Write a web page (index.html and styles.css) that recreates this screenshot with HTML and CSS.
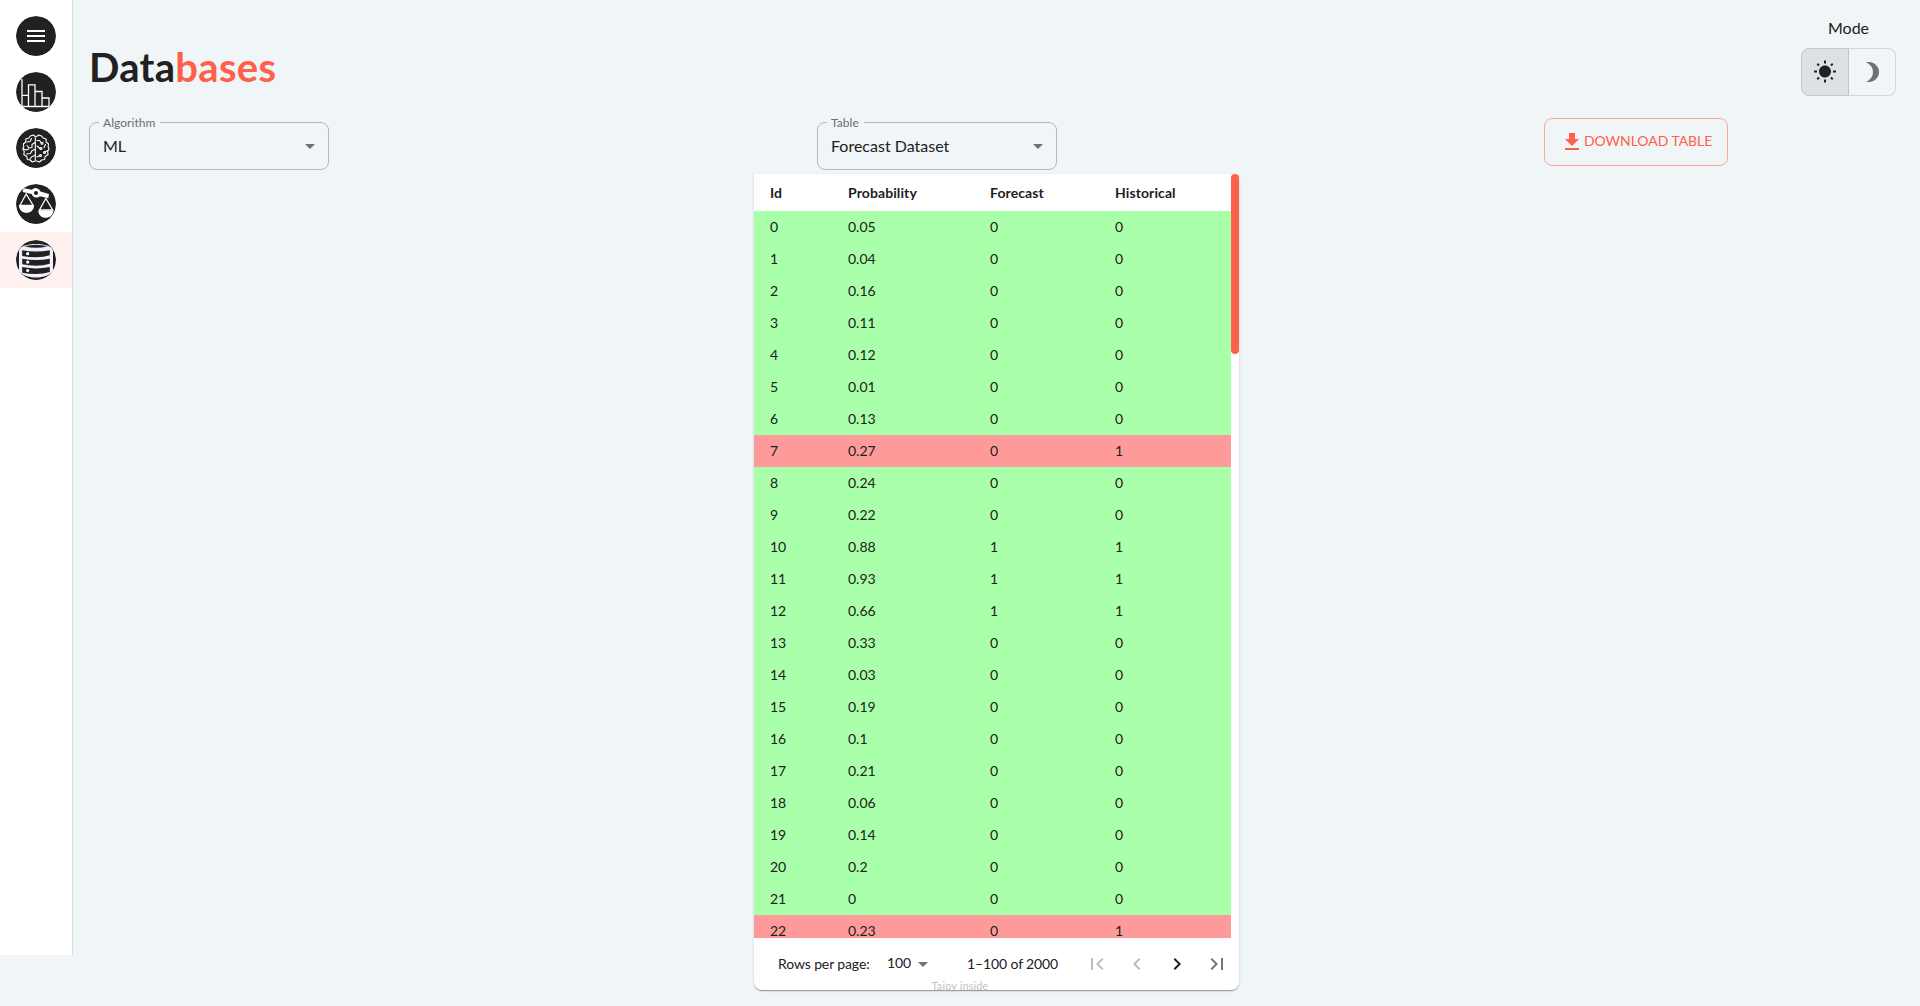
FILE: index.html
```html
<!DOCTYPE html>
<html lang="en">
<head>
<meta charset="utf-8">
<title>Databases</title>
<link rel="stylesheet" href="styles.css">
</head>
<body>
<div class="app">
  <nav class="menu">
    <a class="menu-item"><svg class="avatar" viewBox="0 0 40 40"><circle cx="20" cy="20" r="20" fill="#212121"/><path d="M11 14h18v2H11zM11 19h18v2H11zM11 24h18v2H11z" fill="#fff"/></svg></a>
    <a class="menu-item"><svg class="avatar" viewBox="0 0 40 40"><circle cx="20" cy="20" r="20" fill="#212121"/><path d="M6 7v27.500M5.500 34.500h28M6.500 23.300h5.500M12.500 34V12.800h6.500V34M19.500 19.500h6.500V34M26.500 26h6.500v8" fill="none" stroke="#fff" stroke-width="1.300"/></svg></a>
    <a class="menu-item"><svg class="avatar" viewBox="0 0 40 40"><circle cx="20" cy="20" r="20" fill="#212121"/>
      <g fill="none" stroke="#fff" stroke-width="1.100" stroke-linejoin="round" stroke-linecap="round">
        <path d="M19.300 8.500l-2-1.500-3 1-1.500 2-3 1v3l-2.500 2 .5 2.500-1 2.500 1.500 2.500-.5 3 3 2 .5 3 3 .5 2 2 3-1V8.500M20.600 8.500l2-1.500 3 1 1.500 2 3 1v3l2.500 2-.5 2.500 1 2.500-1.500 2.500.5 3-3 2-.5 3-3 .5-2 2-3-1"/>
        <path d="M15.500 10.500l-1.500 3-3 .5M19 14.500l-3 2v3l-3 .5-2-2.500M7.500 21l3 1 2-1M19 21.500l-3 1-1.500 3-4 .5M19 27.500l-3 1-2 2.500M21 12.500h2.500l1.500 2M21 18l3 2.500M29.500 16.500l-1.500 3M32 22.500l-3.500 1.500M21 29l3-1.500"/>
        <circle cx="26" cy="15.300" r="1"/><circle cx="25" cy="20.500" r="1"/><circle cx="28.500" cy="24.500" r="1"/><circle cx="24.500" cy="27.500" r="1"/>
      </g></svg></a>
    <a class="menu-item"><svg class="avatar" viewBox="0 0 40 40"><circle cx="20" cy="20" r="20" fill="#212121"/>
      <path d="M7.500 4.300l8.500 1.400a5 5 0 0 1 8.500 1.800l8.500 2.600-.7 4.200-8.400-2.100a5 5 0 0 1-8.200-2.200L6.500 8z" fill="#fff"/><circle cx="20" cy="9" r="2.100" fill="#212121"/>
      <path d="M10.200 10L3.800 21.500h13.400zM29.800 14.500L23.400 26h13.400z" fill="#212121" stroke="#fff" stroke-width="1.300"/>
      <path d="M3 21.500h15c0 4.500-3.300 7.300-7.500 7.300S3 26 3 21.500zM22.300 26.500h15c0 4.500-3.300 7.300-7.500 7.300s-7.500-2.800-7.500-7.300z" fill="#fff"/></svg></a>
    <a class="menu-item selected"><svg class="avatar" viewBox="0 0 40 40"><circle cx="20" cy="20" r="20" fill="#212121"/>
      <path d="M4 8.500C8 2.500 32 2.500 36 8.500l1 2v21l-2 1.500C29 39 11 39 5 33l-2-1.500v-21z" fill="#f1effa"/>
      <path d="M8.500 6.200q11.500-3 23 0-11.500 3-23 0zM6.200 10.300q13.800 2.600 27.600 0v5q-6 2-14 2-7 0-13.600-1.400zM6.200 18.700q13.800 2.600 27.600 0v5q-6 2-14 2-7 0-13.600-1.400zM6.200 27.100q13.800 2.600 27.600 0v5q-6 2-14 2-7 0-13.600-1.400z" fill="#212121"/>
      <circle cx="11.700" cy="13.700" r="1.600" fill="#fff"/><circle cx="11.700" cy="22.100" r="1.600" fill="#fff"/><circle cx="11.700" cy="30.500" r="1.600" fill="#fff"/></svg></a>
  </nav>
  <main class="page">
    <header class="top">
      <h1 class="title">Data<span class="accent">bases</span></h1>
      <div class="mode">
        <p class="mode-label">Mode</p>
        <div class="toggle">
          <button class="toggle-btn on"><svg class="icon" viewBox="0 0 24 24"><path d="M6.760 4.840l-1.800-1.790-1.410 1.410 1.790 1.790 1.420-1.410zM4 10.500H1v2h3v-2zm9-9.950h-2V3.500h2V.55zm7.450 3.910l-1.410-1.410-1.790 1.790 1.410 1.410 1.790-1.790zm-3.210 13.700l1.790 1.800 1.410-1.410-1.800-1.790-1.400 1.400zM20 10.500v2h3v-2h-3zm-8-5c-3.310 0-6 2.690-6 6s2.690 6 6 6 6-2.690 6-6-2.690-6-6-6zm-1 16.950h2V19.500h-2v2.950zm-7.450-3.910l1.410 1.410 1.790-1.800-1.410-1.410-1.790 1.800z"/></svg></button>
          <button class="toggle-btn"><svg class="icon" viewBox="0 0 24 24"><path d="M9 2c-1.050 0-2.050.16-3 .46 4.060 1.270 7 5.060 7 9.540 0 4.480-2.940 8.270-7 9.540.95.3 1.950.46 3 .46 5.520 0 10-4.480 10-10S14.520 2 9 2z"/></svg></button>
        </div>
      </div>
    </header>
    <section class="controls">
      <fieldset class="select"><legend>Algorithm</legend><span>ML</span><svg class="icon" viewBox="0 0 24 24"><path d="M7 10l5 5 5-5z"/></svg></fieldset>
      <fieldset class="select"><legend>Table</legend><span>Forecast Dataset</span><svg class="icon" viewBox="0 0 24 24"><path d="M7 10l5 5 5-5z"/></svg></fieldset>
      <button class="download"><svg class="icon" viewBox="0 0 24 24"><path d="M19 9h-4V3H9v6H5l7 7 7-7zM5 18v2h14v-2H5z"/></svg><span class="download-text">DOWNLOAD TABLE</span></button>
    </section>
    <section class="paper">
      <div class="viewport">
        <table class="grid">
          <colgroup><col class="c-id"><col class="c-prob"><col class="c-fore"><col class="c-hist"></colgroup>
          <thead><tr><th>Id</th><th>Probability</th><th>Forecast</th><th>Historical</th></tr></thead>
          <tbody>
            <tr><td>0</td><td>0.05</td><td>0</td><td>0</td></tr>
            <tr><td>1</td><td>0.04</td><td>0</td><td>0</td></tr>
            <tr><td>2</td><td>0.16</td><td>0</td><td>0</td></tr>
            <tr><td>3</td><td>0.11</td><td>0</td><td>0</td></tr>
            <tr><td>4</td><td>0.12</td><td>0</td><td>0</td></tr>
            <tr><td>5</td><td>0.01</td><td>0</td><td>0</td></tr>
            <tr><td>6</td><td>0.13</td><td>0</td><td>0</td></tr>
            <tr class="wrong"><td>7</td><td>0.27</td><td>0</td><td>1</td></tr>
            <tr><td>8</td><td>0.24</td><td>0</td><td>0</td></tr>
            <tr><td>9</td><td>0.22</td><td>0</td><td>0</td></tr>
            <tr><td>10</td><td>0.88</td><td>1</td><td>1</td></tr>
            <tr><td>11</td><td>0.93</td><td>1</td><td>1</td></tr>
            <tr><td>12</td><td>0.66</td><td>1</td><td>1</td></tr>
            <tr><td>13</td><td>0.33</td><td>0</td><td>0</td></tr>
            <tr><td>14</td><td>0.03</td><td>0</td><td>0</td></tr>
            <tr><td>15</td><td>0.19</td><td>0</td><td>0</td></tr>
            <tr><td>16</td><td>0.1</td><td>0</td><td>0</td></tr>
            <tr><td>17</td><td>0.21</td><td>0</td><td>0</td></tr>
            <tr><td>18</td><td>0.06</td><td>0</td><td>0</td></tr>
            <tr><td>19</td><td>0.14</td><td>0</td><td>0</td></tr>
            <tr><td>20</td><td>0.2</td><td>0</td><td>0</td></tr>
            <tr><td>21</td><td>0</td><td>0</td><td>0</td></tr>
            <tr class="wrong"><td>22</td><td>0.23</td><td>0</td><td>1</td></tr>
          </tbody>
        </table>
        <div class="track"><div class="thumb"></div></div>
      </div>
      <footer class="pager">
        <span class="pager-label">Rows per page:</span>
        <span class="pager-size">100</span>
        <svg class="icon" viewBox="0 0 24 24"><path d="M7 10l5 5 5-5z"/></svg>
        <span class="pager-range">1–100 of 2000</span>
        <span class="nav off"><svg class="icon" viewBox="0 0 24 24"><path d="M18.410 16.590L13.820 12l4.590-4.590L17 6l-6 6 6 6zM6 6h2v12H6z"/></svg></span>
        <span class="nav off"><svg class="icon" viewBox="0 0 24 24"><path d="M15.410 7.410L14 6l-6 6 6 6 1.410-1.410L10.830 12z"/></svg></span>
        <span class="nav next"><svg class="icon" viewBox="0 0 24 24"><path d="M10 6L8.590 7.410 13.170 12l-4.580 4.590L10 18l6-6z"/></svg></span>
        <span class="nav"><svg class="icon" viewBox="0 0 24 24"><path d="M5.590 7.410L10.180 12l-4.590 4.590L7 18l6-6-6-6zM16 6h2v12h-2z"/></svg></span>
      </footer>
    </section>
  </main>
</div>
<div class="brand">Taipy inside</div>
</body>
</html>
```
FILE: styles.css
```css
* { box-sizing: border-box; }
body {
  margin: 0;
  height: 1006px;
  overflow: hidden;
  background: #f0f5f7;
  color: #212121;
  font: 16px/24px Lato, "Liberation Sans", sans-serif;
}
button { font: inherit; background: none; padding: 0; }
.app { display: flex; align-items: flex-start; }
.icon { width: 24px; height: 24px; fill: currentColor; flex: none; display: block; }

.menu {
  width: 73px;
  height: 955px;
  flex: none;
  padding-top: 8px;
  background: #fff;
  border-right: 1px solid #dcdfe0;
}
.menu-item { display: flex; height: 56px; padding: 8px 16px; }
.menu-item.selected { background: #fff1ef; }
.avatar { width: 40px; height: 40px; border-radius: 50%; }

.page { flex: 1; padding: 16px 16px 0; }
.top { display: flex; justify-content: space-between; height: 102px; }
.title { margin: 27px 0 0; font-size: 40px; line-height: 48px; font-weight: 700; letter-spacing: .3px; }
.accent { color: #ff6049; }
.mode { width: 95px; margin-right: 8px; text-align: center; }
.mode-label { margin: 0 0 8px; }
.toggle { display: flex; height: 48px; }
.toggle-btn {
  flex: 1;
  display: flex;
  align-items: center;
  justify-content: center;
  border: 1px solid #d3d7da;
  border-left: 0;
  border-radius: 0 8px 8px 0;
  color: #6f7172;
}
.toggle-btn.on {
  flex: none;
  width: 48px;
  background: #dde1e3;
  border: 1px solid #c2c6c8;
  border-radius: 8px 0 0 8px;
  color: #212121;
}

.controls { display: grid; grid-template-columns: 728px 727px 1fr; height: 56px; align-items: start; }
.select {
  display: flex;
  align-items: center;
  justify-content: space-between;
  width: 240px;
  height: 54px;
  margin: -2px 0 0;
  padding: 0 6px 7px 13px;
  border: 1px solid #b5b9bb;
  border-radius: 8px;
}
.select legend {
  margin-left: -4px;
  padding: 0 5px 0 4px;
  font-size: 12px;
  line-height: 13px;
  letter-spacing: .05px;
  color: #6b6d6f;
}
.select .icon { color: #6f7172; }
.download {
  display: flex;
  align-items: center;
  width: 184px;
  height: 48px;
  padding-left: 15px;
  border: 1px solid #ffa69a;
  border-radius: 8px;
  color: #ff6049;
  font-size: 14px;
}
.download-text { padding-bottom: 2px; letter-spacing: -.05px; }

.paper {
  width: 485px;
  height: 816px;
  margin: 0 auto;
  background: #fff;
  border-radius: 0 4px 8px 8px;
  box-shadow: 0 2px 1px -1px rgba(0,0,0,.2), 0 1px 1px rgba(0,0,0,.14), 0 1px 3px rgba(0,0,0,.12);
}
.viewport { display: flex; height: 764px; overflow: hidden; }
.grid { width: 477px; table-layout: fixed; border-collapse: collapse; font-size: 14px; line-height: 20px; align-self: flex-start; }
.c-id { width: 78px; }
.c-prob { width: 142px; }
.c-fore { width: 125px; }
.c-hist { width: 132px; }
.grid th { height: 37px; padding: 0 16px; text-align: left; font-weight: 700; letter-spacing: .1px; }
.grid td { height: 32px; padding: 0 16px; background: #aaffaa; }
.grid .wrong td { background: #ff9a9a; }
.track { width: 8px; }
.thumb { height: 180px; border-radius: 4px; background: #ff6049; }

.pager { display: flex; align-items: center; height: 52px; padding: 0 2px 0 24px; font-size: 14px; line-height: 20px; letter-spacing: -.12px; }
.pager > .icon { color: #6f7172; }
.pager-label { width: 109px; }
.pager-size { width: 24px; padding-bottom: 2px; }
.pager-range { width: 110px; margin-left: 32px; white-space: nowrap; }
.nav { display: flex; justify-content: center; width: 40px; color: #757575; }
.nav.off { color: #bdbdbd; }
.nav.next { color: #212121; }

.brand {
  position: absolute;
  left: 0;
  right: 0;
  top: 976px;
  text-align: center;
  font-size: 11px;
  line-height: 20px;
  letter-spacing: .1px;
  color: #c4c4c4;
}
```
